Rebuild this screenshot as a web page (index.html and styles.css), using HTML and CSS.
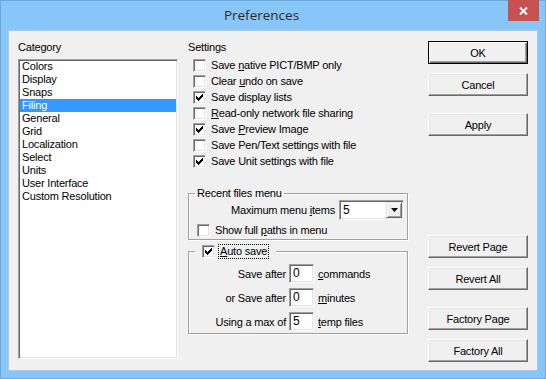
FILE: index.html
```html
<!DOCTYPE html>
<html>
<head>
<meta charset="utf-8">
<title>Preferences</title>
<link rel="stylesheet" href="styles.css">
</head>
<body>
<div class="window">
  <div class="titlebar">
    <div class="title">Preferences</div>
    <div class="close"><svg width="9" height="8" viewBox="0 0 9 8"><path d="M1 0.5 L8 7.5 M8 0.5 L1 7.5" stroke="#fff" stroke-width="2" fill="none"/></svg></div>
  </div>
  <div class="client">
    <div class="col-cat">
      <div class="lbl">Category</div>
      <ul class="listbox">
        <li>Colors</li>
        <li>Display</li>
        <li>Snaps</li>
        <li class="sel">Filing</li>
        <li>General</li>
        <li>Grid</li>
        <li>Localization</li>
        <li>Select</li>
        <li>Units</li>
        <li>User Interface</li>
        <li>Custom Resolution</li>
      </ul>
    </div>

    <div class="col-set">
      <div class="lbl">Settings</div>
      <div class="checks">
        <div class="chk"><span class="cb"></span><span>Save <u>n</u>ative PICT/BMP only</span></div>
        <div class="chk"><span class="cb"></span><span>Clear <u>u</u>ndo on save</span></div>
        <div class="chk"><span class="cb"><svg class="tick" width="7" height="7" viewBox="0 0 7 7"><path d="M6 0h1v1h-1zM5 1h2v1h-2zM0 2h1v1h-1zM4 2h3v1h-3zM0 3h2v1h-2zM3 3h3v1h-3zM0 4h5v1h-5zM1 5h3v1h-3zM2 6h1v1h-1z"/></svg></span><span>Save display lists</span></div>
        <div class="chk"><span class="cb"></span><span><u>R</u>ead-only network file sharing</span></div>
        <div class="chk"><span class="cb"><svg class="tick" width="7" height="7" viewBox="0 0 7 7"><path d="M6 0h1v1h-1zM5 1h2v1h-2zM0 2h1v1h-1zM4 2h3v1h-3zM0 3h2v1h-2zM3 3h3v1h-3zM0 4h5v1h-5zM1 5h3v1h-3zM2 6h1v1h-1z"/></svg></span><span>Save <u>P</u>review Image</span></div>
        <div class="chk"><span class="cb"></span><span>Save Pen/Text settings with file</span></div>
        <div class="chk"><span class="cb"><svg class="tick" width="7" height="7" viewBox="0 0 7 7"><path d="M6 0h1v1h-1zM5 1h2v1h-2zM0 2h1v1h-1zM4 2h3v1h-3zM0 3h2v1h-2zM3 3h3v1h-3zM0 4h5v1h-5zM1 5h3v1h-3zM2 6h1v1h-1z"/></svg></span><span>Save Unit settings with file</span></div>
      </div>

      <fieldset class="group recent">
        <legend>Recent files menu</legend>
        <div class="row-combo">
          <span class="combo-lbl">Maximum menu <u>i</u>tems</span>
          <div class="combo">
            <span class="val">5</span>
            <span class="drop"><svg width="7" height="4" viewBox="0 0 7 4"><path d="M0 0h7L3.5 4z"/></svg></span>
          </div>
        </div>
        <div class="chk"><span class="cb"></span><span>Show full <u>p</u>aths in menu</span></div>
      </fieldset>

      <fieldset class="group auto">
        <legend><span class="cb"><svg class="tick" width="7" height="7" viewBox="0 0 7 7"><path d="M6 0h1v1h-1zM5 1h2v1h-2zM0 2h1v1h-1zM4 2h3v1h-3zM0 3h2v1h-2zM3 3h3v1h-3zM0 4h5v1h-5zM1 5h3v1h-3zM2 6h1v1h-1z"/></svg></span><span class="focus"><u>A</u>uto save</span></legend>
        <div class="ar"><span class="al">Save after</span><span class="edit">0</span><span class="au"><u>c</u>ommands</span></div>
        <div class="ar"><span class="al">or Save after</span><span class="edit">0</span><span class="au"><u>m</u>inutes</span></div>
        <div class="ar"><span class="al">Using a max of</span><span class="edit">5</span><span class="au"><u>t</u>emp files</span></div>
      </fieldset>
    </div>

    <div class="col-btn">
      <div class="btn def">OK</div>
      <div class="btn">Cancel</div>
      <div class="btn gap">Apply</div>
      <div class="btn big-gap">Revert Page</div>
      <div class="btn">Revert All</div>
      <div class="btn gap">Factory Page</div>
      <div class="btn">Factory All</div>
    </div>
  </div>
</div>
</body>
</html>
```

FILE: styles.css
```css
* { box-sizing: border-box; }
html, body { margin: 0; padding: 0; }
body {
  width: 546px;
  height: 379px;
  overflow: hidden;
  font-family: "Liberation Sans", Arial, sans-serif;
  font-size: 11px;
  letter-spacing: -0.2px;
  color: #000;
}
u { text-decoration: underline; text-underline-offset: 1px; }

.window {
  width: 546px;
  height: 379px;
  background: #88c5f9;
  border: 1px solid #6ea8dc;
  display: flex;
  flex-direction: column;
}
.titlebar {
  height: 29px;
  flex: none;
  display: flex;
  align-items: flex-start;
}
.title {
  flex: 1;
  text-align: center;
  padding-left: 14px;
  font-family: "Open Sans", "Noto Sans", sans-serif;
  font-size: 13.5px;
  line-height: 29px;
  letter-spacing: 0;
  color: #2a2a2a;
}
.close {
  width: 31px;
  height: 21px;
  margin: -1px 6px 0 0;
  background: #c75050;
  display: flex;
  align-items: center;
  justify-content: center;
}

.client {
  width: 530px;
  height: 341px;
  margin-left: 7px;
  background: #f0f0f0;
  border: 1px solid #a9cbea;
  display: flex;
  align-items: flex-start;
  padding: 10px 0 0 9px;
}

.lbl { height: 13px; line-height: 13px; }

/* category list */
.col-cat { width: 160px; flex: none; }
.listbox {
  list-style: none;
  margin: 5px 0 0;
  padding: 0 1px 1px 1px;
  height: 300px;
  background: #fff;
  border: 1px solid;
  border-color: #a0a0a0 #fff #fff #a0a0a0;
  box-shadow: inset 1px 1px #696969, inset -1px -1px #e3e3e3;
}
.listbox li {
  height: 13px;
  line-height: 13px;
  padding-left: 2px;
  white-space: nowrap;
}
.listbox li.sel { background: #3399ff; color: #fff; }

/* settings */
.col-set { width: 220px; flex: none; margin-left: 10px; }
.checks { margin-top: 3px; }
.chk {
  display: flex;
  align-items: center;
  height: 16px;
  white-space: nowrap;
}
.checks .chk { padding-left: 5px; }
.cb {
  width: 13px;
  height: 13px;
  flex: none;
  background: #fff;
  border: 1px solid;
  border-color: #a0a0a0 #fff #fff #a0a0a0;
  box-shadow: inset 1px 1px #696969, inset -1px -1px #e3e3e3;
  display: flex;
  align-items: center;
  justify-content: center;
  margin-right: 5px;
}
.tick { display: block; shape-rendering: crispEdges; }

.group {
  margin: 18px 0 0;
  padding: 0 3px 1px 8px;
  min-width: 0;
  border: 1px solid #a0a0a0;
  box-shadow: inset 1px 1px #fff, 1px 1px #fff;
}
.group legend {
  padding: 0 2px;
  margin-left: -2px;
  line-height: 13px;
  background: #f0f0f0;
}
.row-combo {
  display: flex;
  justify-content: flex-end;
  align-items: center;
  height: 20px;
}
.combo-lbl { margin-right: 4px; }
.combo {
  width: 65px;
  height: 20px;
  background: #fff;
  border: 1px solid;
  border-color: #a0a0a0 #fff #fff #a0a0a0;
  box-shadow: inset 1px 1px #696969, inset -1px -1px #e3e3e3;
  padding: 1px;
  display: flex;
  align-items: center;
}
.combo .val { flex: 1; padding-left: 2px; font-size: 12px; }
.drop {
  width: 16px;
  height: 16px;
  background: #f0f0f0;
  border: 1px solid;
  border-color: #e3e3e3 #696969 #696969 #e3e3e3;
  box-shadow: inset 1px 1px #fff, inset -1px -1px #a0a0a0;
  display: flex;
  align-items: center;
  justify-content: center;
}
.drop svg { display: block; }
.recent .chk { margin-top: 2px; }

.auto { margin-top: 4px; padding-top: 5px; padding-bottom: 2px; }
.auto legend {
  display: flex;
  align-items: center;
  padding: 0 7px 0 7px;
}
.auto legend .cb { margin-right: 3px; }
.focus {
  line-height: 13px;
  padding: 0 1px;
  border: 1px dotted #000;
}
.ar {
  display: flex;
  align-items: center;
  height: 19px;
  margin-bottom: 5px;
  white-space: nowrap;
}
.ar:last-child { margin-bottom: 0; }
.al { width: 89px; text-align: right; }
.edit {
  width: 25px;
  height: 19px;
  margin-left: 3px;
  background: #fff;
  border: 1px solid;
  border-color: #a0a0a0 #fff #fff #a0a0a0;
  box-shadow: inset 1px 1px #696969, inset -1px -1px #e3e3e3;
  padding: 0 0 0 3px;
  line-height: 16px;
  font-size: 12px;
}
.au { margin-left: 4px; }

/* buttons */
.col-btn {
  width: 100px;
  flex: none;
  margin-left: 20px;
  display: flex;
  flex-direction: column;
}
.btn {
  height: 23px;
  margin-top: 9px;
  background: #f0f0f0;
  border: 1px solid;
  border-color: #fff #696969 #696969 #fff;
  box-shadow: inset -1px -1px #a0a0a0, inset 1px 1px #e3e3e3;
  display: flex;
  align-items: center;
  justify-content: center;
  white-space: nowrap;
}
.btn.def {
  margin-top: 0;
  border-color: #000;
  box-shadow: inset 1px 1px #fff, inset -1px -1px #696969, inset -2px -2px #a0a0a0;
}
.btn.gap { margin-top: 17px; }
.btn.big-gap { margin-top: 99px; }
```
